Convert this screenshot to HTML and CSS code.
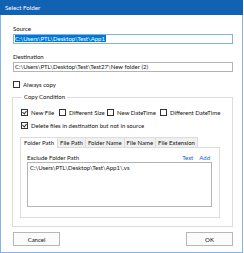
FILE: index.html
```html
<!DOCTYPE html>
<html>
<head>
    <title>Select Folder</title>
    <link rel="stylesheet" href="styles.css">
</head>
<body>
    <div class="window">
        <div class="titlebar">Select Folder</div>
        <div class="content">
            <div class="field-label">Source</div>
            <div class="input focused"><span class="selected">C:\Users\PTL\Desktop\Test\App1</span></div>

            <div class="field-label">Destination</div>
            <div class="input">C:\Users\PTL\Desktop\Test\Test27\New folder (2)</div>

            <div class="check-row always">
                <label class="check"><span class="box"></span>Always copy</label>
            </div>

            <fieldset class="group">
                <legend>Copy Condition</legend>
                <div class="check-row">
                    <label class="check w-new"><span class="box checked"></span>New File</label>
                    <label class="check w-size"><span class="box"></span>Different Size</label>
                    <label class="check w-date"><span class="box"></span>New DateTime</label>
                    <label class="check"><span class="box"></span>Different DateTime</label>
                </div>
                <div class="check-row">
                    <label class="check"><span class="box checked"></span>Delete files in destination but not in source</label>
                </div>

                <div class="tabs">
                    <div class="tab-strip">
                        <span class="tab active">Folder Path</span>
                        <span class="tab">File Path</span>
                        <span class="tab">Folder Name</span>
                        <span class="tab">File Name</span>
                        <span class="tab">File Extension</span>
                    </div>
                    <div class="tab-panel">
                        <div class="panel-head">
                            <span>Exclude Folder Path</span>
                            <span class="links">
                                <a href="#">Text</a>
                                <a href="#">Add</a>
                            </span>
                        </div>
                        <div class="listbox">
                            <div class="list-item">C:\Users\PTL\Desktop\Test\App1\.vs</div>
                        </div>
                    </div>
                </div>
            </fieldset>

            <div class="buttons">
                <button class="btn">Cancel</button>
                <button class="btn">OK</button>
            </div>
        </div>
    </div>
</body>
</html>
```

FILE: styles.css
```css
:root {
    --title-color: #1262b3;
    --frame-color: #86b4e4;
    --text-color: #111;
    --line-color: #dcdcdc;
    --input-border: #b4b4b4;
    --focus-border: #7fb3e6;
    --select-color: #0078d7;
    --link-color: #0a64d6;
}

* {
    margin: 0;
    padding: 0;
    box-sizing: border-box;
}

body {
    font-family: Lato, 'Open Sans', sans-serif;
    font-size: 6px;
    color: var(--text-color);
    background: #fff;
    width: 244px;
    height: 253px;
    overflow: hidden;
}

.window {
    width: 243px;
    height: 253px;
    border: 1px solid var(--frame-color);
    border-top: none;
    background: #fff;
}

.titlebar {
    height: 15px;
    margin: 0 -1px;
    padding-left: 5px;
    background: var(--title-color);
    color: #fff;
    line-height: 15px;
    font-size: 6.2px;
}

.content {
    padding: 10px 9px 0 12px;
}

.field-label {
    height: 8px;
    line-height: 8px;
}

.input {
    height: 10px;
    margin-top: 1px;
    margin-bottom: 9px;
    padding: 0 1px;
    border: 1px solid var(--input-border);
    line-height: 8px;
    white-space: nowrap;
    overflow: hidden;
}

.input.focused {
    border-color: var(--focus-border);
}

.selected {
    background: var(--select-color);
    color: #fff;
    padding-right: 1px;
}

.check-row {
    display: flex;
    align-items: center;
    height: 8px;
}

.always {
    margin-top: -1px;
}

.check {
    display: flex;
    align-items: center;
    gap: 3px;
    white-space: nowrap;
}

.box {
    flex-shrink: 0;
    width: 7px;
    height: 7px;
    border: 1px solid #333;
    background: #fff;
    position: relative;
}

.box.checked::after {
    content: '';
    position: absolute;
    left: 1px;
    top: 0;
    width: 2px;
    height: 3px;
    border-right: 1px solid #333;
    border-bottom: 1px solid #333;
    transform: rotate(40deg);
}

.w-new { width: 38px; }
.w-size { width: 48px; }
.w-date { width: 53px; }

.group {
    margin: 5px 0 0 -1px;
    height: 134px;
    padding: 7px 12px 0 8px;
    border: 1px solid var(--line-color);
}

.group legend {
    margin-left: 1px;
    padding: 0 2px;
    line-height: 8px;
}

.group .check-row + .check-row {
    margin-top: 5px;
}

.tabs {
    width: 200px;
    margin: 7px 0 0 -1px;
}

.tab-strip {
    display: flex;
    height: 11px;
    align-items: flex-end;
}

.tab {
    height: 10px;
    line-height: 9px;
    padding: 0 2px;
    white-space: nowrap;
    border: 1px solid var(--line-color);
    border-bottom: none;
    border-left: none;
    background: #f0f0f0;
}

.tab.active {
    height: 11px;
    line-height: 10px;
    padding: 0 3px;
    border-left: 1px solid var(--line-color);
    background: #fff;
    margin-bottom: -1px;
    position: relative;
}

.tab-panel {
    height: 71px;
    padding: 6px 7px 0 6px;
    border: 1px solid var(--line-color);
}

.panel-head {
    display: flex;
    justify-content: space-between;
    height: 8px;
    line-height: 8px;
}

.links {
    display: flex;
    gap: 6px;
    padding-right: 2px;
}

.links a {
    color: var(--link-color);
    text-decoration: none;
}

.listbox {
    height: 45px;
    border: 1px solid var(--input-border);
    padding: 1px 2px;
}

.list-item {
    line-height: 8px;
    white-space: nowrap;
}

.buttons {
    display: flex;
    justify-content: space-between;
    margin-top: 5px;
}

.btn {
    width: 47px;
    height: 14px;
    font-family: inherit;
    font-size: 6px;
    color: var(--text-color);
    background: #fbfbfb;
    border: 1px solid #b7b7b7;
}
```
